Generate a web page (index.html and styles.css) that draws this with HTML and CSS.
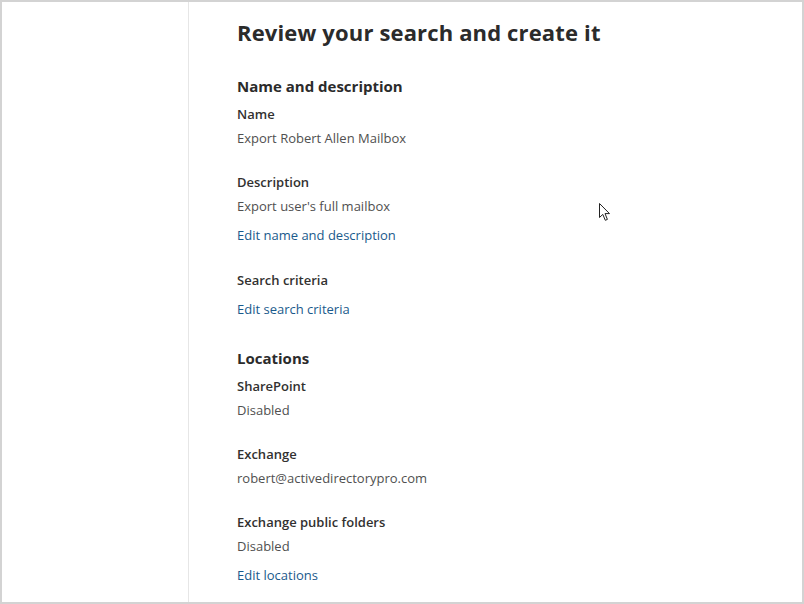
FILE: index.html
```html
<!DOCTYPE html>
<html lang="en">
<head>
<meta charset="utf-8">
<title>Review your search</title>
<link rel="stylesheet" href="styles.css">
</head>
<body>
<div class="frame">
  <aside class="side"></aside>
  <main class="content">
    <h1 class="title">Review your search and create it</h1>
    <section class="section first">
      <h2 class="section-title">Name and description</h2>
      <div class="field">
        <div class="label">Name</div>
        <div class="value">Export Robert Allen Mailbox</div>
      </div>
      <div class="field">
        <div class="label">Description</div>
        <div class="value">Export user's full mailbox</div>
      </div>
      <a class="link" href="#">Edit name and description</a>
    </section>
    <section class="section">
      <div class="label">Search criteria</div>
      <a class="link" href="#">Edit search criteria</a>
    </section>
    <section class="section locs">
      <h2 class="section-title">Locations</h2>
      <div class="field">
        <div class="label">SharePoint</div>
        <div class="value">Disabled</div>
      </div>
      <div class="field">
        <div class="label">Exchange</div>
        <div class="value">robert@activedirectorypro.com</div>
      </div>
      <div class="field">
        <div class="label">Exchange public folders</div>
        <div class="value">Disabled</div>
      </div>
      <a class="link" href="#">Edit locations</a>
    </section>
  </main>
  <svg class="cursor" width="13" height="20" viewBox="0 0 13 20" aria-hidden="true">
    <path d="M1.5 1.5 L1.5 15.5 L4.8 12.4 L7.3 18.3 L9.4 17.4 L7 11.6 L11.5 11.6 Z" fill="#fff" stroke="#222" stroke-width="1" stroke-linejoin="miter"/>
  </svg>
</div>
</body>
</html>
```

FILE: styles.css
```css
html, body {
  margin: 0;
  padding: 0;
  background: #ffffff;
}
.frame {
  position: relative;
  width: 804px;
  height: 604px;
  box-sizing: border-box;
  border: 2px solid #d3d3d3;
  background: #ffffff;
  display: flex;
  overflow: hidden;
  font-family: "Open Sans", "Noto Sans", sans-serif;
  color: #323130;
}
.side {
  width: 186px;
  flex: none;
  border-right: 1px solid #e6e6e6;
}
.content {
  flex: 1;
  padding: 14px 0 0 48px;
  display: flex;
  flex-direction: column;
}
.title {
  margin: 0;
  font-size: 22px;
  line-height: 32px;
  font-weight: 700;
  letter-spacing: 0.15px;
  color: #2b2b2b;
}
.section {
  display: flex;
  flex-direction: column;
  align-items: flex-start;
  gap: 9px;
  margin-top: 25px;
}
.section.first {
  margin-top: 27px;
  gap: 0;
}
.section.locs {
  margin-top: 28px;
  gap: 0;
}
.section-title {
  margin: 0 0 7px;
  font-size: 15px;
  line-height: 22px;
  font-weight: 700;
  color: #2b2b2b;
}
.field {
  display: flex;
  flex-direction: column;
  gap: 4px;
}
.field + .field {
  margin-top: 24px;
}
.field + .link {
  margin-top: 9px;
}
.label {
  font-size: 13px;
  line-height: 20px;
  font-weight: 600;
  color: #323130;
}
.value {
  font-size: 13px;
  line-height: 20px;
  color: #505050;
}
.link {
  font-size: 13px;
  line-height: 20px;
  color: #1a5a8c;
  text-decoration: none;
}
.cursor {
  position: absolute;
  left: 596px;
  top: 200px;
}
```
